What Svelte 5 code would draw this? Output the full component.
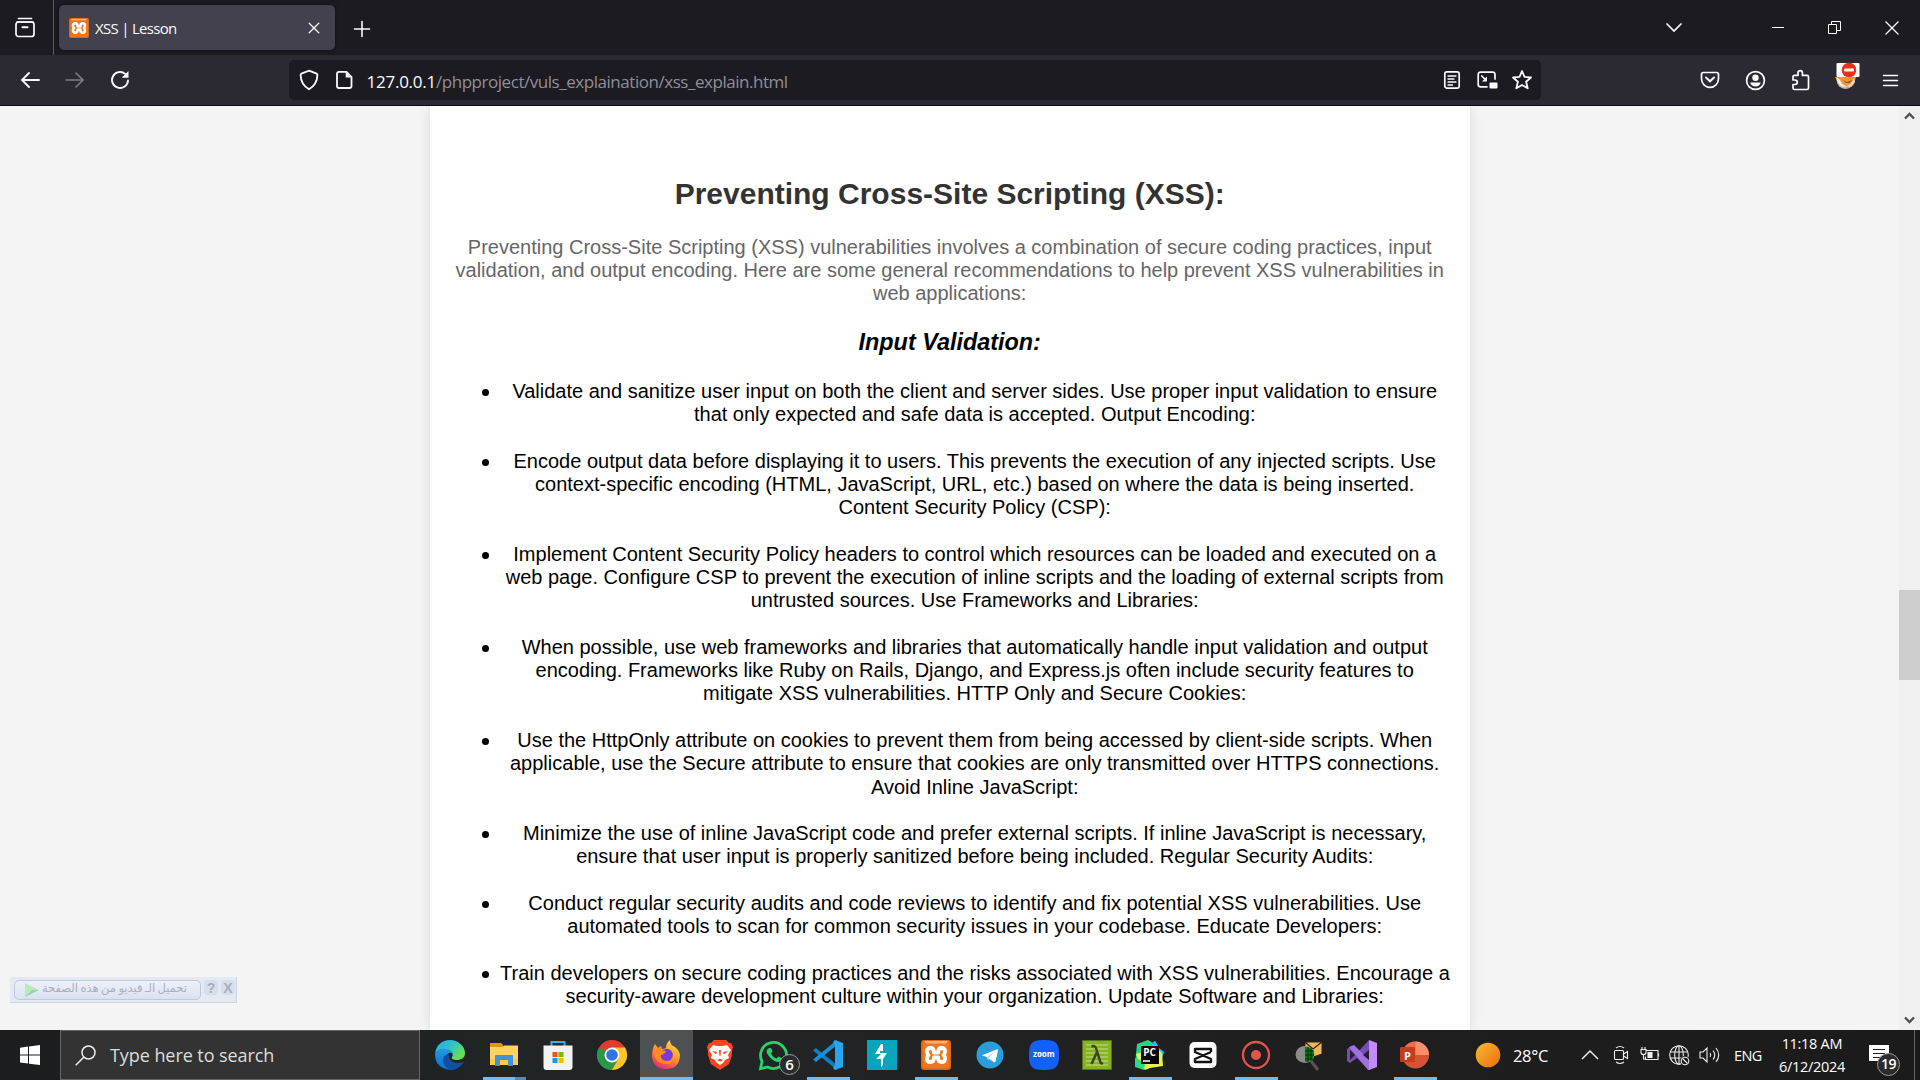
<script>
  const items = [
    ['Validate and sanitize user input on both the client and server sides. Use proper input validation to ensure', 'that only expected and safe data is accepted. Output Encoding:'],
    ['Encode output data before displaying it to users. This prevents the execution of any injected scripts. Use', 'context-specific encoding (HTML, JavaScript, URL, etc.) based on where the data is being inserted.', 'Content Security Policy (CSP):'],
    ['Implement Content Security Policy headers to control which resources can be loaded and executed on a', 'web page. Configure CSP to prevent the execution of inline scripts and the loading of external scripts from', 'untrusted sources. Use Frameworks and Libraries:'],
    ['When possible, use web frameworks and libraries that automatically handle input validation and output', 'encoding. Frameworks like Ruby on Rails, Django, and Express.js often include security features to', 'mitigate XSS vulnerabilities. HTTP Only and Secure Cookies:'],
    ['Use the HttpOnly attribute on cookies to prevent them from being accessed by client-side scripts. When', 'applicable, use the Secure attribute to ensure that cookies are only transmitted over HTTPS connections.', 'Avoid Inline JavaScript:'],
    ['Minimize the use of inline JavaScript code and prefer external scripts. If inline JavaScript is necessary,', 'ensure that user input is properly sanitized before being included. Regular Security Audits:'],
    ['Conduct regular security audits and code reviews to identify and fix potential XSS vulnerabilities. Use', 'automated tools to scan for common security issues in your codebase. Educate Developers:'],
    ['Train developers on secure coding practices and the risks associated with XSS vulnerabilities. Encourage a', 'security-aware development culture within your organization. Update Software and Libraries:']
  ];
  const intro = [
    'Preventing Cross-Site Scripting (XSS) vulnerabilities involves a combination of secure coding practices, input',
    'validation, and output encoding. Here are some general recommendations to help prevent XSS vulnerabilities in',
    'web applications:'
  ];
</script>

{#snippet xampp()}
  <svg viewBox="0 0 30 30" class="fill">
    <rect width="30" height="30" rx="3" fill="#d9651a" />
    <rect x="1.5" y="1.5" width="27" height="27" rx="2" fill="#f0761d" />
    <path d="M3 1h24l-2 2.500H5z" fill="#f8b184" />
    <path d="M12.800 12.600h4.400v-.8q0-3.800 3.400-3.800t3.400 3.600q0 2.200-1.500 3.400q1.500 1.200 1.500 3.400q0 3.600-3.400 3.600t-3.400-3.800v-.8h-4.400v.8q0 3.800-3.400 3.800t-3.400-3.600q0-2.200 1.500-3.400q-1.500-1.200-1.500-3.400q0-3.600 3.400-3.600t3.400 3.800z" fill="none" stroke="#fff" stroke-width="3.800" stroke-linejoin="round" />
  </svg>
{/snippet}

<div class="screen">
  <header class="titlebar">
    <div class="view">
      <svg width="22" height="22" viewBox="0 0 22 22" class="line"><path d="M4.500 1.500h13M3 5h16" /><rect x="2" y="5" width="18" height="14.500" rx="2.500" /><path d="M8.500 10.300h5" stroke-width="2" /></svg>
    </div>
    <div class="tab">
      <span class="favicon">{@render xampp()}</span>
      <span class="tabname">XSS | Lesson</span>
      <svg width="12" height="12" viewBox="0 0 12 12" class="line"><path d="M1.200 1.200l9.600 9.600M10.800 1.200l-9.600 9.600" stroke-width="1.300" /></svg>
    </div>
    <div class="cell plus"><svg width="16" height="16" viewBox="0 0 16 16" class="line"><path d="M8 .500v15M.500 8h15" stroke-width="1.600" /></svg></div>
    <div class="cell tablist"><svg width="16" height="10" viewBox="0 0 16 10" class="line"><path d="M1 1l7 7 7-7" /></svg></div>
    <div class="cell win"><svg width="12" height="12" viewBox="0 0 12 12"><path d="M0 5h12v1H0z" fill="#fff" /></svg></div>
    <div class="cell win"><svg width="13" height="13" viewBox="0 0 13 13" fill="none" stroke="#fff"><path d="M.500 3.500h8v9h-8zM3.500 3.500v-3h9v9h-4" /></svg></div>
    <div class="cell win"><svg width="14" height="14" viewBox="0 0 14 14" fill="none" stroke="#fff" stroke-width="1.200"><path d="M.500.500l13 13M13.500.500l-13 13" /></svg></div>
  </header>

  <nav class="toolbar">
    <div class="cell nav"><svg width="18" height="16" viewBox="0 0 18 16" class="line"><path d="M8 1L1 8l7 7M1 8h17" stroke-width="1.800" /></svg></div>
    <div class="cell nav dim"><svg width="18" height="16" viewBox="0 0 18 16" class="line"><path d="M10 1l7 7-7 7M17 8H0" stroke-width="1.600" /></svg></div>
    <div class="cell nav"><svg width="20" height="20" viewBox="0 0 20 20" class="line"><path d="M18 10.500a8 8 0 1 1-2.800-6.600" stroke-width="1.900" /><path d="M18.500 1v6.800h-6.800z" fill="#fbfbfe" stroke="none" /></svg></div>
    <div class="url">
      <div class="cell small"><svg width="20" height="22" viewBox="0 0 20 22" class="line"><path d="M10 1.600L17.600 4.600Q18.400 5 18.400 6Q18.200 15.500 10 20.300Q1.800 15.500 1.600 6Q1.600 5 2.400 4.600z" stroke-width="1.800" /></svg></div>
      <div class="cell small"><svg width="18" height="20" viewBox="0 0 18 20" class="line"><path d="M4 1.800h7.500l5 5V16q0 2-2 2H4q-2 0-2-2V3.800q0-2 2-2z" stroke-width="1.800" /><path d="M10.700 1.500v6h6z" fill="#fbfbfe" stroke="none" /></svg></div>
      <div class="address"><b>127.0.0.1</b>/phpproject/vuls_explaination/xss_explain.html</div>
      <div class="cell small"><svg width="18" height="20" viewBox="0 0 18 20" class="line"><rect x="1.800" y="1.900" width="14.400" height="16.200" rx="2.200" /><path d="M5 6h8M5 9h6M5 12h8M5 15h4.500" stroke-width="1.300" /></svg></div>
      <div class="cell small"><svg width="20" height="20" viewBox="0 0 20 20" class="line"><path d="M18 9V4.500q0-2.300-2.300-2.300H3.500q-2.300 0-2.300 2.300v10q0 2.300 2.300 2.300H10" /><path d="M4.800 6l3.500 3.500" /><path d="M10 6.500v5H5z" fill="#fff" stroke="none" /><rect x="12.500" y="12.500" width="8" height="6" rx="1" fill="#fff" stroke="none" /></svg></div>
      <div class="cell small"><svg width="22" height="22" viewBox="0 0 22 22" class="line"><path d="M11 2l2.500 5.800 6.500.700-4.900 4.300 1.600 6.500L11 16l-5.700 3.300 1.600-6.500L2 8.500l6.500-.700z" stroke-linejoin="round" stroke-width="1.800" /></svg></div>
    </div>
    <div class="extensions">
      <div class="cell nav"><svg width="20" height="18" viewBox="0 0 20 18" class="line"><path d="M3.500 1.500h13q2 0 2 2v4.300q0 3.500-2.500 6T10 16.300t-6-2.500-2.500-6V3.500q0-2 2-2z" /><path d="M6 6.500l4 3.800 4-3.800" stroke-width="2" /></svg></div>
      <div class="cell nav"><svg width="20" height="20" viewBox="0 0 20 20" class="line"><circle cx="10.500" cy="10.500" r="8.900" /><circle cx="10.500" cy="7.800" r="3.200" fill="#fff" stroke="none" /><path d="M5.300 12.500h10.400q-1 4-5.200 4t-5.200-4z" fill="#fff" stroke="none" /></svg></div>
      <div class="cell nav"><svg width="20" height="22" viewBox="0 0 20 22" class="line"><path d="M8 6.300V4q0-2.400 2.200-2.400T12.400 4v2.300H17q1.500 0 1.500 1.500V19q0 1.500-1.500 1.500H4.500Q3 20.500 3 19v-3.500h2q2.300 0 2.300-2.200T5 11H3V7.800q0-1.500 1.500-1.500z" stroke-linejoin="round" stroke-width="1.700" /></svg></div>
      <div class="cell nav fox">
        <svg width="25" height="28" viewBox="0 0 25 28"><circle cx="10.500" cy="17" r="9" fill="#d3b9a0" /><path d="M0 14l6 .500 15-.500-2 7q-2 4-7 3.500Q5 24 2 17z" fill="#f0923e" /><path d="M0 14q6 2 7 7l6 3-6-.500q-4-2-6-9.500z" fill="#f4f0ea" /><path d="M19 15l1 4-5 5-3-1q5-2 7-8z" fill="#e8e0d8" /><path d="M8 17l4 2 5-2-2 3h-4z" fill="#8a5a34" /><rect x="1.500" y="0" width="23" height="14" rx="1" fill="#fff" /><circle cx="14" cy="7" r="7.300" fill="#ed301c" /><rect x="9" y="5.500" width="10" height="3" rx="1" fill="#fff" /></svg>
      </div>
      <div class="cell nav"><svg width="15" height="13" viewBox="0 0 15 13" class="line"><path d="M.500 1.500h14M.500 6.500h14M.500 11.500h14" stroke-width="1.500" /></svg></div>
    </div>
  </nav>

  <main class="page">
    <article class="card">
      <h2>Preventing Cross-Site Scripting (XSS):</h2>
      <p class="intro">{#each intro as line}<span class="row">{line}</span>{/each}</p>
      <h3>Input Validation:</h3>
      <ul>
        {#each items as lines}
          <li>{#each lines as line}<span class="row">{line}</span>{/each}</li>
        {/each}
      </ul>
    </article>
    <div class="scrollbar">
      <svg width="11" height="8" viewBox="0 0 11 8" class="arrow"><path d="M1 6.500L5.500 2 10 6.500" /></svg>
      <div class="thumb"></div>
      <svg width="11" height="8" viewBox="0 0 11 8" class="arrow"><path d="M1 1.500L5.500 6 10 1.500" /></svg>
    </div>
    <div class="downloader">
      <div class="grab"><svg width="14" height="14" viewBox="0 0 14 14"><path d="M0 0l14 7-14 7z" fill="#b5ebbd" /><path d="M0 14l14-7H7z" fill="#a3cfb1" /></svg><span dir="rtl">تحميل الـ فيديو من هذه الصفحة</span></div>
      <i>?</i><i>X</i>
    </div>
  </main>

  <footer class="taskbar">
    <div class="cell start"><svg width="20" height="20" viewBox="0 0 20 20" fill="#fff"><path d="M0 2.700L8 1.600V9.500H0zM9 1.400L20 0v9.500H9zM0 10.500h8v8.100l-8-1.100zM9 10.500h11V20L9 18.700z" /></svg></div>
    <div class="search"><svg width="21" height="21" viewBox="0 0 21 21" fill="none" stroke="#eee" stroke-width="1.500"><circle cx="13.500" cy="7.500" r="6.500" /><path d="M9 12L.700 20.300" /></svg><span>Type here to search</span></div>
    <div class="apps">
      <div class="app"><svg viewBox="0 0 30 30">
        <defs><linearGradient id="edgeTop" x1="0" y1="0" x2="1" y2=".6"><stop offset="0" stop-color="#2ba9e8" /><stop offset=".5" stop-color="#2dc1cf" /><stop offset="1" stop-color="#6be04e" /></linearGradient><linearGradient id="edgeLow" x1="0" y1="0" x2="0" y2="1"><stop offset="0" stop-color="#1f9be0" /><stop offset="1" stop-color="#0872d3" /></linearGradient></defs>
        <path d="M0 14C1 5 7 0 15 0s15 6 15 13c0 5-4 7-8 7-4 0-6-1-5-3 2-3 0-6-4-7C7 8 2 10 0 14z" fill="url(#edgeTop)" />
        <path d="M0 14q4-6 11-5 7 1 7 6-1-3-4-2-4 2-3 8 2 7 9 8-6 2-12-1Q0 24 0 14z" fill="url(#edgeLow)" />
        <path d="M9 16q-3 7 3 12 3 2 7 1.500 6-1 10-8-4 2-9 1-7-2-6-8-3 0-5 1.500z" fill="#124fa0" /></svg></div>
      <div class="app open stack"><svg viewBox="0 0 30 30"><path d="M1 3h11l2 2v4H1z" fill="#d99a0b" /><path d="M1 7h12l2-1.500h14V25H1z" fill="#ffd265" /><path d="M1 19h28v6H1z" fill="#ffc84a" /><path d="M6 26V16q0-1 1-1h16q1 0 1 1v10h-5v-6h-8v6z" fill="#3d94db" /></svg></div>
      <div class="app"><svg viewBox="0 0 30 30"><path d="M8.500 7V2h13v5" fill="none" stroke="#31b2ee" stroke-width="2" /><path d="M.500 5.500h29V27q0 3-3 3h-23q-3 0-3-3z" fill="#f2f2f2" /><path d="M9.500 12h5v5h-5z" fill="#ef5022" /><path d="M15.500 12h5v5h-5z" fill="#7fb900" /><path d="M9.500 18h5v5h-5z" fill="#00a3ee" /><path d="M15.500 18h5v5h-5z" fill="#feb800" /></svg></div>
      <div class="app"><svg viewBox="0 0 30 30"><circle cx="15" cy="15" r="15" fill="#e33b2e" /><path d="M2 7.500A15 15 0 0 0 15 30l6.500-11.300L15 15z" fill="#279847" /><path d="M28 7.500H15L21.500 18.700 15 30A15 15 0 0 0 28 7.500z" fill="#fcc629" /><circle cx="15" cy="15" r="7.500" fill="#fff" /><circle cx="15" cy="15" r="5.800" fill="#2e76e8" /></svg></div>
      <div class="app open active"><svg viewBox="0 0 30 30">
        <defs><linearGradient id="foxGlow" x1=".8" y1="0" x2=".3" y2="1"><stop offset="0" stop-color="#ffe53b" /><stop offset=".5" stop-color="#ff9428" /><stop offset="1" stop-color="#f02370" /></linearGradient></defs>
        <path d="M1 16q0-7 3-12l3 4 3-2 1 3q2 0 4-1 0-5 4-8 0 4 3 6l2 1q5 4 5 9-1 13-14 13T1 16z" fill="url(#foxGlow)" /><circle cx="15.500" cy="15" r="6.300" fill="#7a3bd0" /><path d="M2 11q2-3 5-3l3-1 1 3 4 1q-1 3-5 4-1 5 5 6 6 0 8-3-1 6-8 6Q4 24 2 11z" fill="#ff8b24" /></svg></div>
      <div class="app"><svg viewBox="0 0 30 30"><path d="M9 0h12l3 3 2 0 2 4-1 4 0 4-3 9-6 4-3 2-3-2-6-4-3-9 0-4-1-4 2-4 2 0z" fill="#ff4420" /><path d="M8 5l4 1h6l4-1 4 5-3 5 1 3-4 2-2 3-3 2-3-2-2-3-4-2 1-3-3-5z" fill="#fff" /><path d="M7 11l5 1-1 2.500zM23 11l-5 1 1 2.500zM12 20l3-1.200 3 1.200-3 1.800zM14 10h2l-.500 6h-1z" fill="#ff4420" /></svg></div>
      <div class="app"><svg viewBox="0 0 30 30"><path d="M3 21.500A13 13 0 1 1 8.500 27L1.500 28.700z" fill="none" stroke="#27d366" stroke-width="2.800" /><path d="M10 8q2-1 3 2l.500 1.500-1.500 2q2 4 5.500 5l2-2 3.500 1.700q.500 3-3.500 3.800-4 0-8-4T7.500 11q.500-2 2.500-3z" fill="#27d366" /></svg><span class="badge six">6</span></div>
      <div class="app open"><svg viewBox="0 0 30 30"><path d="M3 8L24 25V30L0 10.500z" fill="#167bc1" /><path d="M3 22L24 5V0L0 19.500z" fill="#168fd9" /><path d="M22 0l8 3v24l-8 3-2-2 2-3V5l-2-3z" fill="#27a5ef" /></svg></div>
      <div class="app"><svg viewBox="0 0 30 30"><path d="M0 0h30v30H0z" fill="#06a5bb" /><path d="M14 4h2v7h-3v2h7l-4 6v6l-2 2v-8H9l5-5H8z" fill="#fff" /></svg></div>
      <div class="app open">{@render xampp()}</div>
      <div class="app"><svg viewBox="0 0 30 30"><circle cx="15" cy="15" r="13.500" fill="#2a9edb" /><path d="M7 15.300L22 9.200q1.300-.300 1 1l-2.500 11.500q-.500 1-1.500.500L11.500 17z" fill="#fff" /><path d="M12 17l8-6-6 7-1 3z" fill="#b9ddf0" /></svg></div>
      <div class="app"><svg viewBox="0 0 30 30"><path d="M15 0c12 0 15 3 15 15s-3 15-15 15S0 27 0 15 3 0 15 0z" fill="#1260ff" /></svg><span class="zoom">zoom</span></div>
      <div class="app"><svg viewBox="0 0 30 30"><path d="M.500.500h29v29H.500z" fill="#87b31c" stroke="#55721d" /><path d="M4 5h22M4 9h22M4 13h22M4 17h22M4 21h22M4 25h22" stroke="#c9dc96" stroke-width="1" /><path d="M9.500 6.500q4-1.500 5 3l4 13q.500 1.500 2.500.500M15 12L9.500 24" fill="none" stroke="#3e4230" stroke-width="2.500" /></svg></div>
      <div class="app open"><svg viewBox="0 0 30 30"><path d="M2 4L13 0l5 3 2-2 4 7-7 18L0 24z" fill="#21d789" /><path d="M16 4l4-3 4 7 5 4-3 10H15z" fill="#07c9ec" /><path d="M1 14L5 25l5 5 5-2 13-2-1-13-5-5z" fill="#e9f34b" /><path d="M0 18v9l9 3 1-8z" fill="#26dd88" /><path d="M6 6h18v18H6z" fill="#080808" /><path d="M8 21h7" stroke="#fff" stroke-width="1.500" /></svg><span class="pc">PC</span></div>
      <div class="app"><svg viewBox="0 0 30 30"><rect x="1.500" y="2" width="27" height="26" rx="5" fill="#fff" /><path d="M23 12V9H7v3l16 7v3H7v-3l16-7" fill="none" stroke="#111" stroke-width="2.300" stroke-linejoin="round" /></svg></div>
      <div class="app open"><svg viewBox="0 0 30 30"><circle cx="15" cy="15" r="13" fill="none" stroke="#e2554c" stroke-width="2.300" /><circle cx="15" cy="15" r="5" fill="#e2554c" /></svg></div>
      <div class="app"><svg viewBox="0 0 30 30"><path d="M11 2l17 0v12l-9 3-8-4z" fill="#eeb95e" stroke="#30250e" /><path d="M11 2l8 7 9-7" fill="none" stroke="#30250e" stroke-width="1.300" /><path d="M17 21l7 9" stroke="#555" stroke-width="3" /><ellipse cx="11" cy="14.500" rx="9.500" ry="8.500" fill="#8c8d89" /><path d="M11 7q9 0 9 8-1 6-9 7z" fill="#087b12" /><path d="M11 11h9M11 15h9M11 19h8M14 7v15M17 8v13" stroke="#032e06" /></svg></div>
      <div class="app"><svg viewBox="0 0 30 30"><path d="M0 9l3-2 7 6 12-13 1 5v20l-1 5L10 18l-7 5-3-2z" fill="#784abc" /><path d="M3 10v10l5-5z" fill="#232323" /><path d="M2 7l5-2 16 16v9h-2z" fill="#a271dd" /><path d="M22 0l8 3v24l-8 3z" fill="#c18bfa" /><path d="M22 10v10l-6-5z" fill="#232323" /></svg></div>
      <div class="app open"><svg viewBox="0 0 30 30"><circle cx="16.500" cy="15" r="13.500" fill="#d65333" /><path d="M16.500 1.500v13.500H3A13.500 13.500 0 0 1 16.500 1.500z" fill="#ee6b4c" /><path d="M16.500 1.500A13.500 13.500 0 0 1 30 15H16.500z" fill="#ff8f6c" /><rect x="1" y="7" width="15" height="15" rx="1" fill="#c63d1c" /></svg><span class="ppt">P</span></div>
    </div>
    <div class="cell weather"><svg width="26" height="26" viewBox="0 0 26 26"><defs><linearGradient id="sun" x1="0" y1="0" x2="1" y2="1"><stop offset="0" stop-color="#f5bc35" /><stop offset="1" stop-color="#ef6b0b" /></linearGradient></defs><circle cx="13" cy="13" r="12.300" fill="url(#sun)" /></svg></div>
    <div class="temp">28°C</div>
    <div class="cell up"><svg width="18" height="10" viewBox="0 0 18 10" class="tray"><path d="M1 9l8-8 8 8" stroke-width="1.500" /></svg></div>
    <div class="cell cam"><svg width="16" height="20" viewBox="0 0 16 20" class="tray"><rect x="1.500" y="5.500" width="9" height="9" rx="1" /><path d="M10.500 9l4-2.500v7l-4-2.500M3 3q4-3 8 0M3 17q4 3 8 0" /></svg></div>
    <div class="cell icon30"><svg width="20" height="16" viewBox="0 0 20 16" class="tray"><path d="M6 3.500h12v9H5.500v-3M18.500 6.500v3M1 2.500h5v3q0 2-2.500 2T1 5.500zM2 0v2M5 0v2M3.500 8v4h2" /><path d="M8 5.500h4v5H8z" fill="#eee" /></svg></div>
    <div class="cell icon30"><svg width="21" height="21" viewBox="0 0 21 21" class="tray"><circle cx="10" cy="10" r="9.300" /><ellipse cx="10" cy="10" rx="4.300" ry="9.300" /><path d="M1 7h18M1 13h18M10 1v18" /><circle cx="16" cy="16" r="5" fill="#1b1b1b" stroke="none" /><circle cx="16" cy="16" r="3.800" /><path d="M13.500 13.500l5 5" /></svg></div>
    <div class="cell icon30"><svg width="21" height="18" viewBox="0 0 21 18" class="tray"><path d="M1 6h3l4-4v14l-4-4H1zM11 7q1.500 2 0 4M14 4.500q3.500 4.500 0 9M17 2q5.500 7 0 14" /></svg></div>
    <div class="cell lang"><span>ENG</span></div>
    <div class="clock"><span class="time">11:18 AM</span><span class="date">6/12/2024</span></div>
    <div class="notices"><svg width="20" height="20" viewBox="0 0 20 20"><path d="M0 0h20v16h-6v4l-4-4H0z" fill="#fff" /><path d="M4 4.500h12M4 8.500h12M4 12.500h7" stroke="#222" /></svg><span class="badge nineteen">19</span></div>
    <div class="desktop"></div>
  </footer>
</div>

<style>
  :global(body) { margin: 0; overflow: hidden; }
  .screen { width: 1920px; height: 1080px; display: flex; flex-direction: column; overflow: hidden; font-family: "Liberation Sans", Arial, sans-serif; }
  svg { display: block; flex: none; overflow: visible; }
  .fill { width: 100%; height: 100%; }
  .line { fill: none; stroke: #fbfbfe; stroke-width: 1.7; stroke-linecap: round; }
  .cell { display: flex; align-items: center; justify-content: center; flex: none; }

  .titlebar { height: 55px; flex: none; display: flex; background: #1c1b22; box-sizing: border-box; }
  .view { width: 54px; box-sizing: border-box; border-right: 1px solid #5b5a60; padding: 17px 0 0 14px; flex: none; }
  .tab { width: 276px; height: 45px; margin: 5px 0 0 5px; box-sizing: border-box; padding: 0 15px 0 10px; background: #42414d; border-radius: 5px; box-shadow: 0 0 4px #0008; display: flex; align-items: center; gap: 6px; flex: none; }
  .favicon { width: 20px; height: 20px; }
  .tabname { flex: 1; color: #fbfbfe; font: 15px "Open Sans", sans-serif; letter-spacing: -.7px; white-space: nowrap; padding-top: 1px; }
  .plus { width: 53px; padding-top: 2px; box-sizing: border-box; }
  .tablist { width: 45px; margin: 0 53px 0 auto; }
  .win { width: 57px; }

  .toolbar { height: 51px; flex: none; display: flex; align-items: center; background: #2b2a33; border-bottom: 1px solid #0c0c0d; padding: 0 7.5px; box-sizing: border-box; }
  .nav { width: 45px; height: 50px; }
  .dim { opacity: .4; }
  .url { width: 1252px; height: 40px; margin-left: 146.5px; border-radius: 5px; box-sizing: border-box; padding: 0 1.5px 0 2.5px; background: #1c1b22; display: flex; align-items: center; flex: none; }
  .small { width: 35px; }
  .address { flex: 1; padding: 2px 0 0 5px; color: #8f8f9a; font: 17px "Open Sans", sans-serif; letter-spacing: -.46px; white-space: nowrap; }
  .address b { color: #fbfbfe; font-weight: 400; letter-spacing: -.25px; }
  .extensions { display: flex; margin-left: auto; }
  .fox svg { margin: -6px 0 0 4px; }

  .page { height: 924px; flex: none; position: relative; display: flex; background: #f4f4f4; overflow: hidden; }
  .card { width: 1040px; height: 924px; margin-left: 430px; box-sizing: border-box; padding: 70px 20.6px 0 20px; background: #fff; box-shadow: 0 0 12.5px rgba(0, 0, 0, .1); text-align: center; font-size: 20px; line-height: 23.28px; flex: none; }
  h2 { margin: 0; font-size: 30px; line-height: 35px; color: #333; }
  p { margin: 24.6px 0 0; color: #666; }
  h3 { margin: 23.4px 0 0; font-size: 23.4px; line-height: 27px; font-style: italic; color: #000; }
  ul { list-style: none; margin: 24px 0 0; padding: 0 0 0 50px; color: #000; }
  li { position: relative; padding-bottom: 23.28px; }
  li::before { content: ""; position: absolute; left: -18px; top: 9px; width: 7px; height: 7px; border-radius: 50%; background: #000; }
  .row { display: block; white-space: nowrap; }
  .scrollbar { width: 21px; margin-left: auto; background: #f0f0f0; display: flex; flex-direction: column; align-items: center; box-sizing: border-box; padding: 6px 0; }
  .arrow { fill: none; stroke: #505050; stroke-width: 2.4; }
  .thumb { width: 21px; height: 90px; margin: 470px 0 auto; background: #cdcdcd; }
  .downloader { position: absolute; left: 10px; top: 871px; width: 227px; height: 26px; box-sizing: border-box; border: 1px solid #ccd2e0; border-width: 0 1px 1px 0; background: #e5e9f2; padding: 3px 2px 3px 4px; display: flex; gap: 3px; }
  .grab { width: 187px; height: 20px; box-sizing: border-box; border: 1px solid #bdc9df; border-radius: 5px; background: linear-gradient(#edf1f8, #dae2f1); display: flex; align-items: center; padding-left: 10px; gap: 2px; flex: none; }
  .grab svg { margin-top: -1px; }
  .grab span { width: 146px; margin-top: -4px; font: 11.5px "DejaVu Sans", sans-serif; word-spacing: -1.2px; color: #aab0be; white-space: nowrap; }
  .downloader i { width: 14px; height: 15px; border-radius: 4px; background: #d7dfed; color: #a6adbc; font: 700 14px/16px "Liberation Sans", sans-serif; text-align: center; flex: none; }

  .taskbar { height: 50px; flex: none; display: flex; background: linear-gradient(90deg, #1b1d1f, #202425 25%, #222425 40%, #1f1f1f 65%, #1b1b1b); color: #fff; font-family: "Open Sans", sans-serif; }
  .start { width: 60px; }
  .search { width: 360px; box-sizing: border-box; border: 1px solid #666; background: #333; display: flex; align-items: center; padding-left: 13.5px; gap: 14.5px; flex: none; }
  .search span { font-size: 18px; letter-spacing: -.07px; color: #ddd; white-space: nowrap; }
  .apps { display: grid; grid-template-columns: repeat(12, 54px) repeat(7, 52.85px); margin-left: 3px; flex: none; }
  .app { position: relative; display: flex; justify-content: center; align-items: center; }
  .app svg { width: 30px; height: 30px; }
  .active { background: #4d5153; margin-left: 1px; }
  .active svg { margin-left: -2px; }
  .open::after { content: ""; position: absolute; bottom: 0; left: 5.5px; width: 43px; height: 3px; background: #76b9ed; }
  .active::after { left: 0; width: 100%; }
  .stack::after { background: linear-gradient(90deg, #76b9ed 75%, #5c87ac 75%); }
  .badge { position: absolute; box-sizing: border-box; border: 1px solid #999; border-radius: 50%; background: #2b2c2d; color: #fff; text-align: center; font-weight: 600; }
  .six { left: 32px; top: 24px; width: 21px; height: 21px; font-size: 15px; line-height: 19px; }
  .zoom, .pc, .ppt { position: absolute; font-weight: 700; color: #fff; line-height: 1; }
  .zoom { font-size: 8px; top: 20px; left: 16px; }
  .pc { font-size: 10px; top: 17px; left: 19.5px; }
  .ppt { font-size: 11px; top: 19.500px; left: 16px; }
  .weather { width: 34px; margin-left: 30px; }
  .temp { width: 60px; margin-left: 8px; font-size: 16.500px; line-height: 51px; letter-spacing: -.3px; flex: none; }
  .tray { fill: none; stroke: #eee; stroke-width: 1.1; }
  .up { width: 34px; }
  .cam { width: 28px; }
  .icon30 { width: 30px; }
  .lang { width: 46px; font-size: 14.500px; letter-spacing: -.5px; height: 50px; }
  .clock { width: 82px; display: flex; flex-direction: column; align-items: center; font-size: 14.500px; line-height: 23px; letter-spacing: -.3px; padding-top: 2px; flex: none; white-space: nowrap; }
  .notices { position: relative; width: 61px; box-sizing: border-box; padding: 15px 0 0 16px; flex: none; }
  .nineteen { left: 24px; top: 23px; width: 23px; height: 23px; font-size: 14px; line-height: 20px; letter-spacing: -.5px; }
  .desktop { width: 5px; border-left: 1px solid #666; flex: none; }
</style>
